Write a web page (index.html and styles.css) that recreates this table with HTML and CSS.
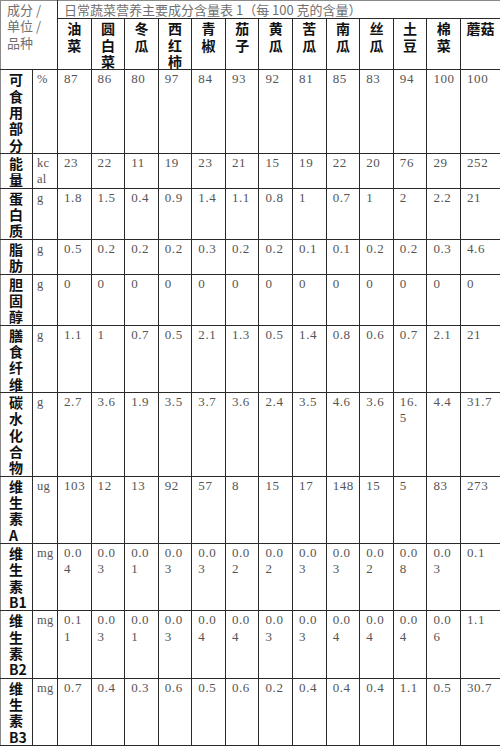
FILE: index.html
```html
<!DOCTYPE html>
<html lang="zh">
<head>
<meta charset="utf-8">
<title>日常蔬菜营养主要成分含量表</title>
<link rel="stylesheet" href="styles.css">
</head>
<body>
<table class="nutri">
  <colgroup>
    <col class="c-name"><col class="c-unit">
    <col class="c-veg"><col class="c-veg"><col class="c-veg"><col class="c-veg">
    <col class="c-veg"><col class="c-veg"><col class="c-veg"><col class="c-veg">
    <col class="c-veg"><col class="c-veg"><col class="c-veg"><col class="c-veg">
    <col class="c-last">
  </colgroup>
  <tr class="top">
    <td class="corner" colspan="2" rowspan="2">成分 /<br>单位 /<br>品种</td>
    <td class="title" colspan="13">日常蔬菜营养主要成分含量表 1（每 100 克的含量）</td>
  </tr>
  <tr>
    <th class="veg">油<br>菜</th>
    <th class="veg">圆<br>白<br>菜</th>
    <th class="veg">冬<br>瓜</th>
    <th class="veg">西<br>红<br>柿</th>
    <th class="veg">青<br>椒</th>
    <th class="veg">茄<br>子</th>
    <th class="veg">黄<br>瓜</th>
    <th class="veg">苦<br>瓜</th>
    <th class="veg">南<br>瓜</th>
    <th class="veg">丝<br>瓜</th>
    <th class="veg">土<br>豆</th>
    <th class="veg">棉<br>菜</th>
    <th class="veg">蘑菇</th>
  </tr>
  <tr>
    <th class="name">可<br>食<br>用<br>部<br>分</th><td class="unit">%</td>
    <td>87</td><td>86</td><td>80</td><td>97</td><td>84</td><td>93</td><td>92</td><td>81</td><td>85</td><td>83</td><td>94</td><td>100</td><td>100</td>
  </tr>
  <tr>
    <th class="name">能<br>量</th><td class="unit">kc<br>al</td>
    <td>23</td><td>22</td><td>11</td><td>19</td><td>23</td><td>21</td><td>15</td><td>19</td><td>22</td><td>20</td><td>76</td><td>29</td><td>252</td>
  </tr>
  <tr>
    <th class="name">蛋<br>白<br>质</th><td class="unit">g</td>
    <td>1.8</td><td>1.5</td><td>0.4</td><td>0.9</td><td>1.4</td><td>1.1</td><td>0.8</td><td>1</td><td>0.7</td><td>1</td><td>2</td><td>2.2</td><td>21</td>
  </tr>
  <tr>
    <th class="name">脂<br>肪</th><td class="unit">g</td>
    <td>0.5</td><td>0.2</td><td>0.2</td><td>0.2</td><td>0.3</td><td>0.2</td><td>0.2</td><td>0.1</td><td>0.1</td><td>0.2</td><td>0.2</td><td>0.3</td><td>4.6</td>
  </tr>
  <tr>
    <th class="name">胆<br>固<br>醇</th><td class="unit">g</td>
    <td>0</td><td>0</td><td>0</td><td>0</td><td>0</td><td>0</td><td>0</td><td>0</td><td>0</td><td>0</td><td>0</td><td>0</td><td>0</td>
  </tr>
  <tr>
    <th class="name">膳<br>食<br>纤<br>维</th><td class="unit">g</td>
    <td>1.1</td><td>1</td><td>0.7</td><td>0.5</td><td>2.1</td><td>1.3</td><td>0.5</td><td>1.4</td><td>0.8</td><td>0.6</td><td>0.7</td><td>2.1</td><td>21</td>
  </tr>
  <tr>
    <th class="name">碳<br>水<br>化<br>合<br>物</th><td class="unit">g</td>
    <td>2.7</td><td>3.6</td><td>1.9</td><td>3.5</td><td>3.7</td><td>3.6</td><td>2.4</td><td>3.5</td><td>4.6</td><td>3.6</td><td>16.<br>5</td><td>4.4</td><td>31.7</td>
  </tr>
  <tr>
    <th class="name">维<br>生<br>素<br>A</th><td class="unit">ug</td>
    <td>103</td><td>12</td><td>13</td><td>92</td><td>57</td><td>8</td><td>15</td><td>17</td><td>148</td><td>15</td><td>5</td><td>83</td><td>273</td>
  </tr>
  <tr>
    <th class="name">维<br>生<br>素<br>B1</th><td class="unit">mg</td>
    <td>0.0<br>4</td><td>0.0<br>3</td><td>0.0<br>1</td><td>0.0<br>3</td><td>0.0<br>3</td><td>0.0<br>2</td><td>0.0<br>2</td><td>0.0<br>3</td><td>0.0<br>3</td><td>0.0<br>2</td><td>0.0<br>8</td><td>0.0<br>3</td><td>0.1</td>
  </tr>
  <tr>
    <th class="name">维<br>生<br>素<br>B2</th><td class="unit">mg</td>
    <td>0.1<br>1</td><td>0.0<br>3</td><td>0.0<br>1</td><td>0.0<br>3</td><td>0.0<br>4</td><td>0.0<br>4</td><td>0.0<br>3</td><td>0.0<br>3</td><td>0.0<br>4</td><td>0.0<br>4</td><td>0.0<br>4</td><td>0.0<br>6</td><td>1.1</td>
  </tr>
  <tr>
    <th class="name">维<br>生<br>素<br>B3</th><td class="unit">mg</td>
    <td>0.7</td><td>0.4</td><td>0.3</td><td>0.6</td><td>0.5</td><td>0.6</td><td>0.2</td><td>0.4</td><td>0.4</td><td>0.4</td><td>1.1</td><td>0.5</td><td>30.7</td>
  </tr>
</table>
</body>
</html>
```
FILE: styles.css
```css
html, body {
  margin: 0;
  padding: 0;
  background: #ffffff;
}

.nutri {
  border-collapse: collapse;
  table-layout: fixed;
  width: 500px;
  font-family: "Liberation Serif", "Noto Sans CJK SC", serif;
  font-size: 13px;
  letter-spacing: 0.6px;
  color: #555555;
}

.c-name { width: 32px; }
.c-unit { width: 25px; }
.c-veg { width: 33.58px; }
.c-last { width: 40px; }

.nutri td,
.nutri th {
  border: 1px solid #2a2a2a;
  vertical-align: top;
  text-align: left;
  padding: 1px 0 0 6px;
  line-height: 16.35px;
  font-weight: normal;
  overflow: hidden;
}

.nutri .top td {
  border-top-color: #8a8a8a;
}

.nutri .corner {
  font-family: "Noto Sans CJK SC", sans-serif;
  font-size: 13px;
  letter-spacing: 0;
  color: #707070;
  border-left-color: #8a8a8a;
}

.nutri .title {
  font-family: "Noto Sans CJK SC", sans-serif;
  font-size: 13px;
  letter-spacing: 0;
  color: #707070;
  white-space: nowrap;
}

.nutri .veg {
  font-family: "Noto Sans CJK SC", sans-serif;
  font-size: 14px;
  font-weight: bold;
  letter-spacing: 0;
  color: #111111;
  text-align: center;
  padding: 1px 0 0 0;
}

.nutri .name {
  font-family: "Noto Sans CJK SC", sans-serif;
  font-size: 14px;
  font-weight: bold;
  letter-spacing: 0;
  color: #111111;
  padding: 1px 0 0 8px;
  border-left-color: #8a8a8a;
}

.nutri .unit {
  padding-left: 4px;
  font-size: 12.5px;
  letter-spacing: 0.3px;
}
```
